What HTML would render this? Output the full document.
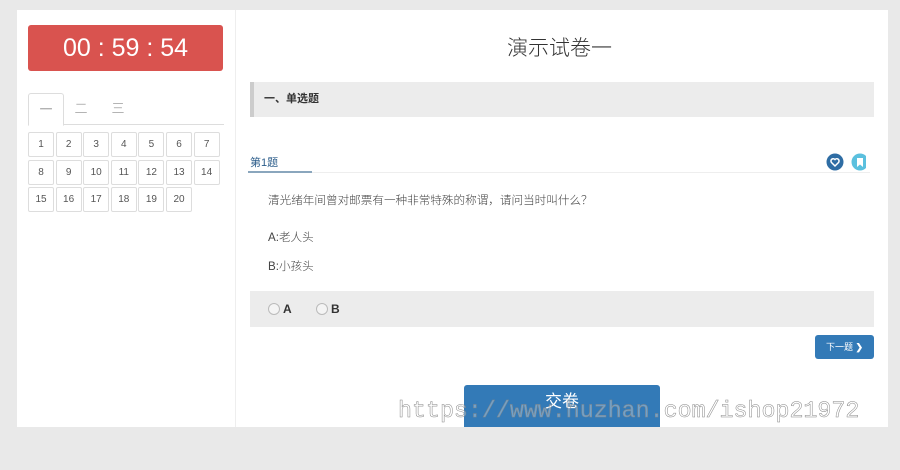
<!DOCTYPE html>
<html><head><meta charset="utf-8"><style>
body{margin:0;width:900px;height:470px;background:#e9e9e9;font-family:"Liberation Sans","Noto Sans CJK SC",sans-serif;position:relative;overflow:hidden;color:#444}
.panel{position:absolute;left:17px;top:10px;width:871px;height:417px;background:#fff}
.side{position:absolute;left:0;top:0;width:218px;height:417px;border-right:1px solid #eee}
.timer{position:absolute;left:11px;top:15px;width:195px;height:46px;background:#d9534f;border-radius:3px;color:#fff;font-size:25px;text-align:center;line-height:46px}
.tabs{position:absolute;left:11px;top:83px;width:196px;height:31px;border-bottom:1px solid #ddd}
.tab{position:absolute;top:0;height:31px;line-height:31px;font-size:13px;color:#888;text-align:center;width:34px;font-weight:300}
.tab.a{border:1px solid #ddd;border-bottom:1px solid #fff;background:#fff;border-radius:3px 3px 0 0;color:#666;height:31px}
.n{position:absolute;width:24px;height:23px;border:1px solid #ddd;border-radius:2px;font-size:10px;line-height:23px;text-align:center;color:#555}
.abs{position:absolute}
.t{font-size:11.6px;color:#444;font-weight:300}
</style></head><body>
<div class="panel">
<div class="side">
<div class="timer">00 : 59 : 54</div>
<div class="tabs">
<div class="tab a" style="left:0">一</div>
<div class="tab" style="left:36px">二</div>
<div class="tab" style="left:73px">三</div>
</div>
</div>
<div class="abs" style="left:490px;top:22px;font-size:21px;color:#333;font-weight:300">演示试卷一</div>
<div class="abs" style="left:233px;top:72px;height:35px;background:#ececec;border-left:4px solid #ccc;font-size:11px;font-weight:bold;line-height:35px;padding-left:10px;box-sizing:border-box;width:624px;color:#333">一、单选题</div>
<div class="abs" style="left:231px;top:162px;width:622px;border-bottom:1px solid #eee"></div>
<div class="abs" style="left:231px;top:161px;width:64px;border-bottom:2px solid #8aa6bd"></div>
<div class="abs" style="left:233px;top:144px;font-size:11px;color:#2b5c8a">第1题</div>
<svg class="abs" style="left:809px;top:143px" width="40" height="18"><circle cx="9" cy="9" r="8.5" fill="#2e6da4"/><path d="M9 13 L5.5 9.5 A2 2 0 0 1 9 6.5 A2 2 0 0 1 12.5 9.5 Z" fill="none" stroke="#fff" stroke-width="1.5"/><circle cx="34" cy="9" r="8.5" fill="#5bc0de"/><path d="M31 5h6v9l-3-2.5-3 2.5z" fill="#fff"/></svg>
<div class="abs t" style="left:251px;top:182px">清光绪年间曾对邮票有一种非常特殊的称谓，请问当时叫什么？</div>
<div class="abs t" style="left:251px;top:219px">A:老人头</div>
<div class="abs t" style="left:251px;top:248px">B:小孩头</div>
<div class="abs" style="left:233px;top:281px;width:624px;height:36px;background:#ececec"></div>
<div class="abs" style="left:251px;top:293px;width:10px;height:10px;border:1px solid #bbb;border-radius:50%;background:#f4f4f4"></div>
<div class="abs" style="left:266px;top:292px;font-size:12px;font-weight:bold;color:#333">A</div>
<div class="abs" style="left:299px;top:293px;width:10px;height:10px;border:1px solid #bbb;border-radius:50%;background:#f4f4f4"></div>
<div class="abs" style="left:314px;top:292px;font-size:12px;font-weight:bold;color:#333">B</div>
<div class="abs" style="left:798px;top:325px;width:59px;height:24px;background:#337ab7;border-radius:3px;color:#fff;font-size:9px;line-height:24px;text-align:center">下一题 <b>❯</b></div>
<div class="abs" style="left:447px;top:375px;width:196px;height:42px;background:#337ab7;border-radius:3px 3px 0 0;color:#fff;font-size:17px;text-align:center;line-height:34px">交卷</div>
</div>
<div id="grid"></div>
<div class="abs" style="left:398px;top:398px;font-family:'Liberation Mono',monospace;font-size:23.3px;color:rgba(255,255,255,0.3);-webkit-text-stroke:0.5px #888;white-space:nowrap">https://www.huzhan.com/ishop21972</div>
<script>
var g=document.getElementById('grid'),h='';
for(var i=1;i<=20;i++){var r=Math.floor((i-1)/7),c=(i-1)%7;h+='<div class="n" style="left:'+(28+c*27.6)+'px;top:'+(132+r*27.6)+'px">'+i+'</div>';}
g.innerHTML=h;
</script>
</body></html>
